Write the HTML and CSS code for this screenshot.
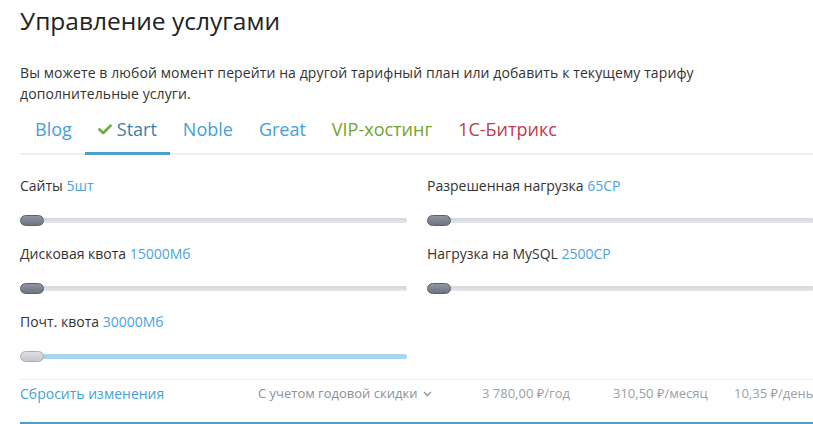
FILE: index.html
```html
<!DOCTYPE html>
<html lang="ru">
<head>
<meta charset="utf-8">
<title>Управление услугами</title>
<link rel="stylesheet" href="styles.css">
</head>
<body>
<div class="page">
  <h1 class="title">Управление услугами</h1>
  <p class="intro">Вы можете в любой момент перейти на другой тарифный план или добавить к текущему тарифу<br>дополнительные услуги.</p>
  <nav class="tabs">
    <a class="tab tab-blue">Blog</a>
    <a class="tab tab-active"><svg class="check" viewBox="0 0 14 11" width="14" height="11"><path d="M1.5 5.5 L5.2 9 L12.5 1.8" fill="none" stroke="#6cb043" stroke-width="2.8" stroke-linecap="round" stroke-linejoin="round"/></svg>Start</a>
    <a class="tab tab-blue">Noble</a>
    <a class="tab tab-blue">Great</a>
    <a class="tab tab-green">VIP-хостинг</a>
    <a class="tab tab-red">1С-Битрикс</a>
  </nav>
  <div class="fields">
    <div class="field">
      <div class="label">Сайты <span class="value">5шт</span></div>
      <div class="slider"><span class="handle"></span><span class="track"></span></div>
    </div>
    <div class="field">
      <div class="label">Разрешенная нагрузка <span class="value">65CP</span></div>
      <div class="slider"><span class="handle"></span><span class="track"></span></div>
    </div>
    <div class="field">
      <div class="label">Дисковая квота <span class="value">15000Мб</span></div>
      <div class="slider"><span class="handle"></span><span class="track"></span></div>
    </div>
    <div class="field">
      <div class="label">Нагрузка на MySQL <span class="value">2500CP</span></div>
      <div class="slider"><span class="handle"></span><span class="track"></span></div>
    </div>
    <div class="field">
      <div class="label">Почт. квота <span class="value">30000Мб</span></div>
      <div class="slider slider-light"><span class="handle"></span><span class="track"></span></div>
    </div>
  </div>
  <div class="summary">
    <a class="reset">Сбросить изменения</a>
    <span class="discount">С учетом годовой скидки <svg class="chevron" viewBox="0 0 9 6" width="9" height="6"><path d="M1 1 L4.5 4.5 L8 1" fill="none" stroke="#9aa0a6" stroke-width="1.6"/></svg></span>
    <span class="price">3 780,00 ₽/год</span>
    <span class="price">310,50 ₽/месяц</span>
    <span class="price">10,35 ₽/день</span>
  </div>
</div>
</body>
</html>
```

FILE: styles.css
```css
html, body {
  margin: 0;
  padding: 0;
  overflow: hidden;
  background: #ffffff;
}

body {
  font-family: "Open Sans", "Noto Sans", sans-serif;
  color: #333333;
  font-size: 14px;
}

.page {
  width: 794px;
  padding-left: 20px;
}

.title {
  margin: 5px 0 0;
  font-size: 24.5px;
  line-height: 32px;
  font-weight: 400;
  color: #222222;
}

.intro {
  margin: 25px 0 3px;
  font-size: 14px;
  line-height: 21px;
  letter-spacing: 0.1px;
  color: #333333;
  white-space: nowrap;
}

.tabs {
  display: flex;
  padding-left: 2px;
  border-bottom: 2px solid #eeeeee;
}

.tab {
  display: flex;
  align-items: center;
  gap: 5px;
  padding: 10px 13px 11px;
  font-size: 18px;
  line-height: 24px;
  border-bottom: 3px solid transparent;
  margin-bottom: -2px;
  cursor: pointer;
}

.tab-blue { color: #449fd8; }
.tab-green { color: #73a52a; }
.tab-red { color: #c23a4c; }

.tab-active {
  color: #3d7fa8;
  border-bottom-color: #4a9fd0;
}

.check {
  display: block;
  margin-top: 1px;
}

.fields {
  display: grid;
  grid-template-columns: 387px 387px;
  column-gap: 20px;
  row-gap: 17px;
  margin-top: 20px;
}

.label {
  line-height: 21px;
  font-size: 14px;
  color: #333333;
}

.value {
  color: #4aa3df;
}

.slider {
  display: flex;
  align-items: center;
  height: 12px;
  margin-top: 18px;
}

.handle {
  flex: none;
  width: 22px;
  height: 9px;
  border-radius: 6px;
  background: linear-gradient(#8f94a2, #6f7482);
  border: 1px solid #5a5f6c;
  position: relative;
  z-index: 1;
}

.track {
  flex: 1;
  height: 5px;
  margin-left: -2px;
  border-radius: 3px;
  background: linear-gradient(#d3d7dc, #e4e7ea);
}

.slider-light .handle {
  background: linear-gradient(#dcdde0, #c6c8cc);
  border-color: #a9acb2;
}

.slider-light .track {
  background: #a8d4f1;
}

.summary {
  display: grid;
  grid-template-columns: 238px 224px 131px 121px auto;
  align-items: center;
  margin-top: 17px;
  border-top: 1px solid #eeeeee;
  border-bottom: 2px solid #4a9fd0;
  padding: 3px 0 18px;
  line-height: 21px;
  white-space: nowrap;
}

.reset {
  color: #449fd8;
  font-size: 14px;
  cursor: pointer;
}

.discount {
  color: #8c9196;
  font-size: 13px;
  display: flex;
  align-items: center;
  gap: 6px;
}

.chevron {
  display: block;
}

.price {
  color: #9aa0a6;
  font-size: 13px;
}
```
